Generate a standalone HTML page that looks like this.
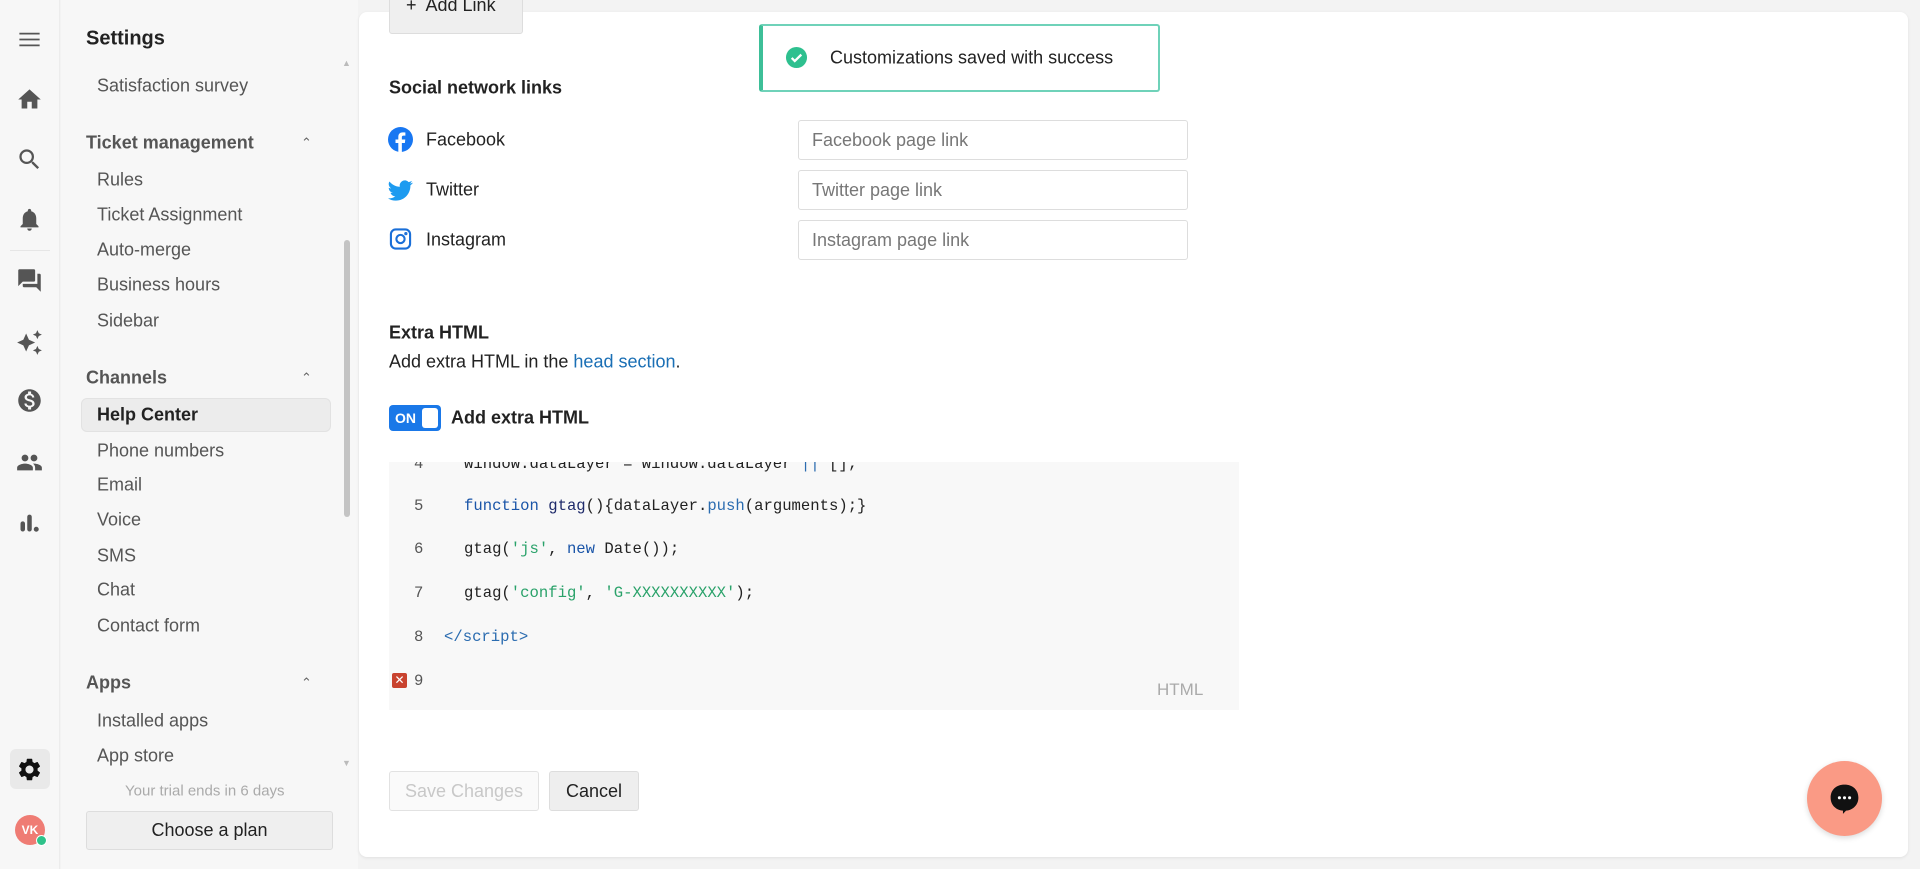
<!DOCTYPE html>
<html><head><meta charset="utf-8"><style>
*{box-sizing:border-box;margin:0;padding:0}
body{width:1920px;height:869px;overflow:hidden;background:#f3f3f3;font-family:"Liberation Sans",sans-serif;color:#222;position:relative}
.abs{position:absolute}
.rail{left:0;top:0;width:60px;height:869px;background:#f7f7f7;border-right:1px solid #ececec}
.rail svg{position:absolute;left:16px;width:27px;height:27px;fill:#555}
.panel{left:61px;top:0;width:297px;height:869px;background:#f7f7f7}
.panel .t{position:absolute;left:36px;font-size:18px;color:#555;transform:translateY(-50%);white-space:nowrap}
.panel .h{position:absolute;left:25px;font-size:18px;font-weight:bold;color:#555;transform:translateY(-50%)}
.caret{position:absolute;left:240px;font-size:13px;color:#666;transform:translateY(-50%)}
.card{left:359px;top:12px;width:1549px;height:845px;background:#fff;border-radius:8px;box-shadow:0 1px 3px rgba(0,0,0,.08)}
.lbl{position:absolute;font-size:18px;color:#222;transform:translateY(-50%)}
.b{font-weight:bold}
.inp{position:absolute;left:798px;width:390px;height:40px;border:1px solid #ddd;border-radius:3px;font-size:18px;color:#777;padding:0 13px;line-height:38px}
.code{left:389px;top:462px;width:850px;height:248px;background:#f8f8f8;overflow:hidden;font-family:"Liberation Mono",monospace;font-size:15.6px}
.ln{position:absolute;left:25px;color:#555;transform:translateY(-50%)}
.cl{position:absolute;left:75px;color:#222;transform:translateY(-50%);white-space:pre}
.kw{color:#1a55a8}.fn{color:#1e2a6a}.st{color:#2aa26a}.pm{color:#2b6cb0}
</style></head><body>
<div class="abs rail">
<svg style="top:26px" viewBox="0 0 24 24"><path d="M3 6h18v1.6H3zM3 11.2h18v1.6H3zM3 16.4h18V18H3z"/></svg>
<svg style="top:86px" viewBox="0 0 24 24"><path d="M10 20v-6h4v6h5v-8h3L12 3 2 12h3v8z"/></svg>
<svg style="top:146px" viewBox="0 0 24 24"><path d="M15.5 14h-.79l-.28-.27A6.47 6.47 0 0 0 16 9.5 6.5 6.5 0 1 0 9.5 16c1.61 0 3.09-.59 4.23-1.57l.27.28v.79l5 4.99L20.490 19l-4.99-5zm-6 0C7.01 14 5 11.990 5 9.5S7.01 5 9.5 5 14 7.01 14 9.5 11.99 14 9.5 14z"/></svg>
<svg style="top:206px" viewBox="0 0 24 24"><path d="M12 22c1.1 0 2-.9 2-2h-4c0 1.1.89 2 2 2zm6-6v-5c0-3.07-1.64-5.64-4.5-6.32V4c0-.83-.67-1.5-1.5-1.5s-1.5.67-1.5 1.5v.68C7.63 5.36 6 7.92 6 11v5l-2 2v1h16v-1l-2-2z"/></svg>
<div class="abs" style="left:10px;top:250px;width:40px;height:1px;background:#e6e6e6"></div>
<svg style="top:267px" viewBox="0 0 24 24"><path d="M21 6h-2v9H6v2c0 .55.45 1 1 1h11l4 4V7c0-.55-.45-1-1-1zm-4 6V3c0-.55-.45-1-1-1H3c-.55 0-1 .45-1 1v14l4-4h10c.55 0 1-.45 1-1z"/></svg>
<svg style="top:329px" viewBox="0 0 24 24"><path d="M19 9l1.25-2.75L23 5l-2.75-1.25L19 1l-1.25 2.75L15 5l2.75 1.25L19 9zm-7.5.5L9 4 6.5 9.5 1 12l5.5 2.5L9 20l2.5-5.5L17 12l-5.5-2.5zM19 15l-1.25 2.75L15 19l2.75 1.25L19 23l1.25-2.75L23 19l-2.75-1.25L19 15z"/></svg>
<svg style="top:387px" viewBox="0 0 24 24"><path d="M12 2C6.48 2 2 6.48 2 12s4.48 10 10 10 10-4.48 10-10S17.52 2 12 2zm1.41 16.09V20h-2.67v-1.93c-1.71-.36-3.16-1.46-3.27-3.4h1.96c.1 1.05.82 1.87 2.65 1.87 1.96 0 2.4-.98 2.4-1.59 0-.83-.44-1.61-2.67-2.14-2.48-.6-4.18-1.62-4.18-3.67 0-1.72 1.39-2.84 3.11-3.21V4h2.67v1.95c1.86.45 2.79 1.86 2.850 3.39H14.3c-.05-1.11-.64-1.87-2.22-1.87-1.5 0-2.4.68-2.4 1.64 0 .84.65 1.39 2.67 1.91s4.18 1.39 4.18 3.91c-.01 1.83-1.38 2.83-3.12 3.16z"/></svg>
<svg style="top:449px" viewBox="0 0 24 24"><path d="M16 11c1.66 0 2.99-1.34 2.99-3S17.66 5 16 5s-3 1.34-3 3 1.34 3 3 3zm-8 0c1.66 0 2.99-1.34 2.99-3S9.66 5 8 5 5 6.34 5 8s1.34 3 3 3zm0 2c-2.33 0-7 1.17-7 3.5V19h14v-2.5c0-2.33-4.67-3.5-7-3.5zm8 0c-.29 0-.62.02-.97.05 1.16.84 1.970 1.97 1.97 3.45V19h6v-2.5c0-2.33-4.67-3.5-7-3.5z"/></svg>
<svg style="top:509px" viewBox="0 0 24 24"><rect x="4" y="11" width="4" height="9" rx="2"/><rect x="10" y="5" width="4" height="15" rx="2"/><circle cx="18" cy="18" r="2.2"/></svg>
<div class="abs" style="left:10px;top:749px;width:40px;height:40px;background:#e9e9e9;border-radius:6px"></div>
<svg style="top:756px;fill:#111" viewBox="0 0 24 24"><path d="M19.14 12.94c.04-.3.06-.61.06-.94s-.02-.64-.07-.94l2.03-1.58a.49.49 0 0 0 .12-.61l-1.92-3.32a.49.49 0 0 0-.59-.22l-2.39.96c-.5-.38-1.03-.7-1.62-.94l-.36-2.54a.48.48 0 0 0-.48-.41h-3.84c-.24 0-.43.17-.47.41l-.36 2.54c-.59.24-1.13.57-1.62.94l-2.39-.96a.48.48 0 0 0-.59.22L2.74 8.87c-.12.21-.08.47.12.61l2.03 1.58c-.05.3-.09.63-.09.94s.02.64.07.94l-2.03 1.58a.49.49 0 0 0-.12.61l1.92 3.32c.12.22.37.29.59.22l2.39-.96c.5.38 1.03.7 1.62.94l.36 2.54c.05.24.24.41.48.41h3.84c.24 0 .44-.17.47-.41l.36-2.54c.59-.24 1.13-.56 1.62-.94l2.39.96c.22.08.47 0 .59-.22l1.92-3.32c.12-.22.07-.47-.12-.61l-2.01-1.58zM12 15.6c-1.98 0-3.6-1.62-3.6-3.6s1.62-3.6 3.6-3.6 3.6 1.62 3.6 3.6-1.62 3.6-3.6 3.6z"/></svg>
<div class="abs" style="left:15px;top:815px;width:30px;height:30px;border-radius:50%;background:#ef7c74;color:#fff;font-size:12px;font-weight:bold;text-align:center;line-height:30px">VK</div>
<div class="abs" style="left:36px;top:835px;width:11px;height:11px;border-radius:50%;background:#2fc28a;border:1.5px solid #fff"></div>
</div>

<div class="abs panel">
<div class="h" style="top:39px;color:#222;font-size:20px">Settings</div>
<div class="t" style="top:86px">Satisfaction survey</div>
<div class="h" style="top:143px">Ticket management</div><div class="caret" style="top:143px">&#8963;</div>
<div class="t" style="top:180px">Rules</div>
<div class="t" style="top:215px">Ticket Assignment</div>
<div class="t" style="top:250px">Auto-merge</div>
<div class="t" style="top:285px">Business hours</div>
<div class="t" style="top:321px">Sidebar</div>
<div class="h" style="top:378px">Channels</div><div class="caret" style="top:378px">&#8963;</div>
<div class="abs" style="left:20px;top:398px;width:250px;height:34px;background:#ececec;border:1px solid #e2e2e2;border-radius:6px"></div>
<div class="t" style="top:415px;color:#222;font-weight:bold">Help Center</div>
<div class="t" style="top:451px">Phone numbers</div>
<div class="t" style="top:485px">Email</div>
<div class="t" style="top:520px">Voice</div>
<div class="t" style="top:556px">SMS</div>
<div class="t" style="top:590px">Chat</div>
<div class="t" style="top:626px">Contact form</div>
<div class="h" style="top:683px">Apps</div><div class="caret" style="top:683px">&#8963;</div>
<div class="t" style="top:721px">Installed apps</div>
<div class="t" style="top:756px">App store</div>
<div class="t" style="top:791px;left:64px;font-size:15px;color:#aaa">Your trial ends in 6 days</div>
<div class="abs" style="left:25px;top:811px;width:247px;height:39px;background:#efefef;border:1px solid #ddd;border-radius:3px;font-size:18px;color:#222;text-align:center;line-height:37px">Choose a plan</div>
<div class="abs" style="left:283px;top:240px;width:6px;height:277px;background:#c4c4c4;border-radius:3px"></div>
<div class="abs" style="left:281px;top:58px;font-size:9px;color:#bbb">&#9650;</div>
<div class="abs" style="left:281px;top:758px;font-size:9px;color:#bbb">&#9660;</div>
</div>

<div class="abs card">
<div class="abs" style="left:30px;top:-20px;width:134px;height:42px;background:#efefef;border:1px solid #ddd;border-radius:3px;font-size:18px;line-height:24px;padding-left:16px">+&nbsp; Add Link</div>
<div class="abs" style="left:400px;top:12px;width:401px;height:68px;border:2px solid #6fd2b9;border-left:4px solid #3dbf98;border-radius:3px;background:#fff"></div>
<svg class="abs" style="left:426px;top:34px" width="23" height="23" viewBox="0 0 24 24"><circle cx="12" cy="12" r="11" fill="#2ec08f"/><path d="M7 12.5l3.2 3.2L17 9" stroke="#fff" stroke-width="2.4" fill="none"/></svg>
<div class="lbl" style="left:471px;top:46px">Customizations saved with success</div>
<div class="lbl b" style="left:30px;top:76px">Social network links</div>
<svg class="abs" style="left:29px;top:115px" width="25" height="25" viewBox="0 0 24 24"><circle cx="12" cy="12" r="12" fill="#1877f2"/><path d="M13.3 24v-8.6h2.9l.4-3.4h-3.3V9.9c0-1 .3-1.6 1.7-1.6h1.7v-3c-.3 0-1.4-.1-2.6-.1-2.5 0-4.2 1.5-4.2 4.3V12H7.2v3.4h2.7V24z" fill="#fff"/></svg>
<div class="lbl" style="left:67px;top:128px">Facebook</div>
<div class="inp" style="top:108px;left:439px">Facebook page link</div>
<svg class="abs" style="left:29px;top:166px" width="25" height="25" viewBox="0 0 24 24"><path fill="#1d9bf0" d="M23.6 4.6c-.9.4-1.8.6-2.8.8 1-.6 1.8-1.6 2.1-2.7-.9.6-2 1-3.1 1.2a4.9 4.9 0 0 0-8.4 4.5C7.4 8.2 3.8 6.3 1.4 3.3a4.9 4.9 0 0 0 1.5 6.6c-.8 0-1.6-.3-2.2-.6 0 2.4 1.7 4.4 3.9 4.8-.7.2-1.5.2-2.2.1.6 2 2.4 3.4 4.6 3.4A9.9 9.9 0 0 1 0 19.5 14 14 0 0 0 7.5 21.7c9.1 0 14-7.5 14-14v-.6c1-.7 1.8-1.6 2.4-2.5z"/></svg>
<div class="lbl" style="left:67px;top:178px">Twitter</div>
<div class="inp" style="top:158px;left:439px">Twitter page link</div>
<svg class="abs" style="left:30px;top:215px" width="23" height="24" viewBox="0 0 24 24" fill="none" stroke="#1a6fd8" stroke-width="2.2"><rect x="2" y="2" width="20" height="20" rx="5"/><circle cx="12" cy="12" r="4.3"/><circle cx="17.6" cy="6.4" r=".6" fill="#1a6fd8"/></svg>
<div class="lbl" style="left:67px;top:228px">Instagram</div>
<div class="inp" style="top:208px;left:439px">Instagram page link</div>
<div class="lbl b" style="left:30px;top:321px">Extra HTML</div>
<div class="lbl" style="left:30px;top:350px">Add extra HTML in the <span style="color:#1a6fb5">head section</span>.</div>
<div class="abs" style="left:30px;top:393px;width:52px;height:26px;background:#1a78e8;border-radius:4px"></div>
<div class="abs" style="left:36px;top:398px;font-size:14px;font-weight:bold;color:#fff">ON</div>
<div class="abs" style="left:63px;top:396px;width:16px;height:20px;background:#fff;border-radius:3px"></div>
<div class="lbl b" style="left:92px;top:406px">Add extra HTML</div>
</div>

<div class="abs code">
<div class="ln" style="top:2px">4</div><div class="cl" style="top:2px">window.dataLayer = window.dataLayer <span class="pm">||</span> [];</div>
<div class="ln" style="top:44px">5</div><div class="cl" style="top:44px"><span class="kw">function</span> <span class="fn">gtag</span>(){dataLayer.<span class="pm">push</span>(arguments);}</div>
<div class="ln" style="top:87px">6</div><div class="cl" style="top:87px">gtag(<span class="st">'js'</span>, <span class="kw">new</span> Date());</div>
<div class="ln" style="top:131px">7</div><div class="cl" style="top:131px">gtag(<span class="st">'config'</span>, <span class="st">'G-XXXXXXXXXX'</span>);</div>
<div class="ln" style="top:175px">8</div><div class="cl" style="top:175px;left:55px"><span class="pm">&lt;/script&gt;</span></div>
<div class="abs" style="left:3px;top:211px;width:15px;height:15px;background:#c9432f;border-radius:2px;color:#fff;font-size:12px;line-height:15px;text-align:center;font-family:'Liberation Sans'">✕</div>
<div class="ln" style="top:219px">9</div>
<div class="abs" style="left:768px;top:218px;font-family:'Liberation Sans';font-size:17px;color:#aaa">HTML</div>
</div>

<div class="abs" style="left:389px;top:771px;width:150px;height:40px;border:1px solid #e2e2e2;border-radius:3px;background:#fafafa;color:#c8c8c8;font-size:18px;text-align:center;line-height:38px">Save Changes</div>
<div class="abs" style="left:549px;top:771px;width:90px;height:40px;border:1px solid #ddd;border-radius:3px;background:#eee;color:#222;font-size:18px;text-align:center;line-height:38px">Cancel</div>
<div class="abs" style="left:1807px;top:761px;width:75px;height:75px;border-radius:50%;background:#fa9a85;box-shadow:0 2px 6px rgba(0,0,0,.15)"></div>
<svg class="abs" style="left:1826px;top:780px" width="37" height="37" viewBox="0 0 24 24"><path d="M12 3C6.5 3 3 6.5 3 11.5c0 4.5 3.3 8 8 8.4V22l2-2.1c4.7-.5 8-3.9 8-8.4C21 6.5 17.5 3 12 3z" fill="#111"/><circle cx="8.7" cy="11.5" r="1" fill="#fff"/><circle cx="12" cy="11.5" r="1" fill="#fff"/><circle cx="15.3" cy="11.5" r="1" fill="#fff"/></svg>
</body></html>
